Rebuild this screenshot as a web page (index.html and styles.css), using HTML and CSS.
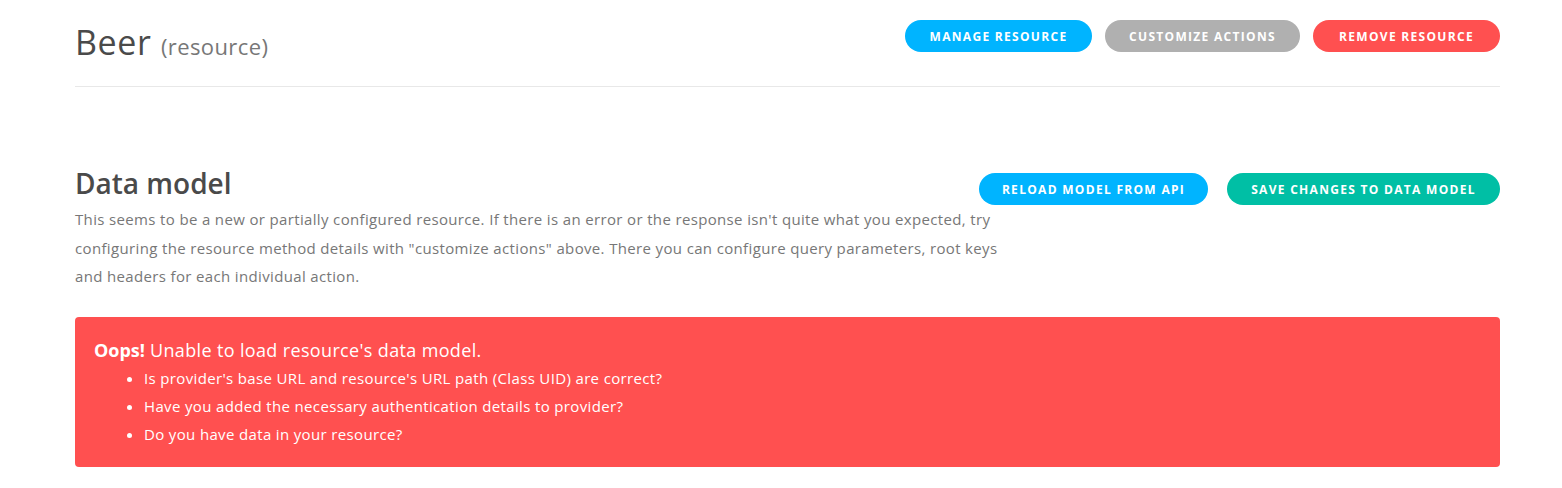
FILE: index.html
```html
<!DOCTYPE html>
<html>
<head>
<meta charset="utf-8">
<link rel="stylesheet" href="styles.css">
</head>
<body>
<div class="page">
  <header class="head">
    <h1 class="title">Beer <span class="sub">(resource)</span></h1>
    <div class="actions">
      <button class="btn blue btn-manage">Manage resource</button>
      <button class="btn gray btn-custom">Customize actions</button>
      <button class="btn red btn-remove">Remove resource</button>
    </div>
  </header>
  <section class="model">
    <div class="model-top">
      <h2 class="h2">Data model</h2>
      <div class="actions actions2">
        <button class="btn blue btn-reload">Reload model from API</button>
        <button class="btn teal btn-save">Save changes to data model</button>
      </div>
    </div>
    <p class="desc">This seems to be a new or partially configured resource. If there is an error or the response isn't quite what you expected, try configuring the resource method details with "customize actions" above. There you can configure query parameters, root keys and headers for each individual action.</p>
    <div class="alert">
      <div class="alert-title"><strong>Oops!</strong> Unable to load resource's data model.</div>
      <ul class="alert-list">
        <li>Is provider's base URL and resource's URL path (Class UID) are correct?</li>
        <li>Have you added the necessary authentication details to provider?</li>
        <li>Do you have data in your resource?</li>
      </ul>
    </div>
  </section>
</div>
</body>
</html>
```
FILE: styles.css
```css
* { box-sizing: border-box; }
html, body { margin: 0; padding: 0; background: #fff; }
body { font-family: "Open Sans", "Liberation Sans", sans-serif; color: #444; }
.page { width: 1425px; margin-left: 75px; }
.head {
  display: flex; justify-content: space-between; align-items: flex-start;
  height: 87px; border-bottom: 1px solid #e8e8e8;
}
.title {
  margin: 20px 0 0; font-size: 34px; font-weight: 400; color: #4a4a4a; line-height: 44px;
  letter-spacing: 0.6px;
}
.sub { font-size: 22px; color: #777; letter-spacing: 0.4px; margin-left: 0; }
.actions { display: flex; gap: 13px; margin-top: 20px; }
.btn {
  height: 32px; border: 0; border-radius: 16px; color: #fff;
  font-family: inherit; font-weight: 700; font-size: 12px; letter-spacing: 1.3px;
  text-transform: uppercase; padding: 0; display: flex; align-items: center; justify-content: center;
}
.blue { background: #00b4ff; }
.gray { background: #b0b0b0; }
.red { background: #ff5050; }
.teal { background: #00bfa5; }
.btn-manage { width: 187px; }
.btn-custom { width: 195px; }
.btn-remove { width: 187px; }
.btn-reload { width: 229px; }
.btn-save { width: 273px; }
.model { padding-top: 80px; }
.model-top { display: flex; justify-content: space-between; align-items: flex-start; height: 38px; }
.h2 { margin: 0; font-size: 28px; font-weight: 600; color: #4a4a4a; line-height: 32px; }
.desc { margin: 0; max-width: 935px; font-size: 15px; line-height: 28.5px; color: #777; letter-spacing: 0.35px; }
.actions2 { margin-top: 6px; gap: 19px; }
.alert {
  margin-top: 26px; background: #ff5050; border-radius: 4px; color: #fff;
  padding: 21px 19px 17px; height: 150px;
}
.alert-title { font-size: 18px; line-height: 24px; letter-spacing: 0.35px; }
.alert-title strong { font-weight: 700; letter-spacing: 0; }
.alert-list { margin: 2px 0 0; padding-left: 50px; font-size: 15px; line-height: 28px; letter-spacing: 0.35px; }
```
